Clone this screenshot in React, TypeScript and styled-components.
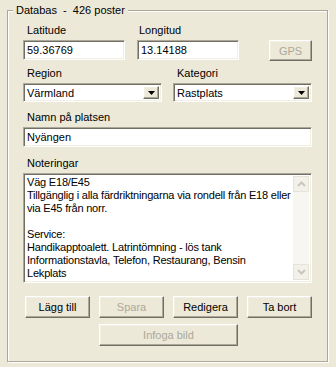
import React from 'react';
import styled, { createGlobalStyle } from 'styled-components';

const GlobalStyle = createGlobalStyle`
  html, body {
    margin: 0;
    padding: 0;
    background: #ece9d8;
  }
  body {
    font-family: "Liberation Sans", Arial, sans-serif;
    font-size: 11px;
    color: #000;
  }
`;

const sunken = `
  border-style: solid;
  border-width: 1px;
  border-color: #aca899 #fff #fff #aca899;
  box-shadow: inset 1px 1px 0 #716f64, inset -1px -1px 0 #f1efe2;
`;

const raised = `
  border-style: solid;
  border-width: 1px;
  border-color: #fff #716f64 #716f64 #fff;
  box-shadow: inset -1px -1px 0 #aca899, inset 1px 1px 0 #f1efe2;
`;

const Window = styled.div`
  width: 336px;
  height: 367px;
  padding: 10px 0 0 7px;
  box-sizing: border-box;
`;

const Group = styled.div`
  position: relative;
  width: 321px;
  height: 352px;
  box-sizing: border-box;
  padding: 13px 15px 0 15px;
  border: 1px solid #aca899;
  box-shadow: 1px 1px 0 #fff, inset 1px 1px 0 #fff;
`;

const Caption = styled.span`
  position: absolute;
  top: -7px;
  left: 5px;
  padding: 0 3px;
  line-height: 13px;
  white-space: pre;
  background: #ece9d8;
`;

const Row = styled.div<{ $gap: number; $top?: number }>`
  display: flex;
  align-items: flex-start;
  gap: ${({ $gap }) => $gap}px;
  margin-top: ${({ $top }) => $top || 0}px;
`;

const Field = styled.div<{ $width?: number; $top?: number }>`
  display: flex;
  flex-direction: column;
  width: ${({ $width }) => ($width ? `${$width}px` : '100%')};
  margin-top: ${({ $top }) => $top || 0}px;
`;

const Label = styled.label<{ $indent?: number }>`
  line-height: 13px;
  padding-left: ${({ $indent }) => $indent ?? 4}px;
  margin-bottom: 3px;
`;

const TextBox = styled.div<{ $height?: number }>`
  ${sunken}
  height: ${({ $height }) => $height || 20}px;
  box-sizing: border-box;
  background: #fff;
  padding-left: 3px;
  display: flex;
  align-items: center;
`;

const Combo = styled.div`
  ${sunken}
  height: 19px;
  box-sizing: border-box;
  background: #fff;
  display: flex;
  padding: 2px;
`;

const ComboText = styled.span`
  flex: 1;
  padding-left: 1px;
  line-height: 15px;
`;

const ComboButton = styled.span`
  ${raised}
  width: 16px;
  box-sizing: border-box;
  background: #ece9d8;
  display: flex;
  align-items: center;
  justify-content: center;
`;

const Button = styled.button<{ $width?: number }>`
  ${raised}
  width: ${({ $width }) => ($width ? `${$width}px` : '100%')};
  height: 22px;
  padding: 0;
  background: #ece9d8;
  font: inherit;
  color: #000;

  &:disabled {
    color: #aca899;
  }
`;

const GpsButton = styled(Button)`
  height: 21px;
  margin-top: 16px;
  margin-left: 18px;
`;

const Notes = styled.div`
  ${sunken}
  height: 110px;
  box-sizing: border-box;
  background: #fff;
  display: flex;
  padding: 2px;
`;

const NotesText = styled.div`
  flex: 1;
  padding-left: 1px;
  line-height: 13px;
  letter-spacing: -0.2px;
  white-space: pre;
  overflow: hidden;
`;

const ScrollBar = styled.div`
  width: 16px;
  display: flex;
  flex-direction: column;
  background: #f7f6f1;
`;

const ScrollArrow = styled.span`
  height: 16px;
  box-sizing: border-box;
  border: 1px solid #e6e4d9;
  background: #f2f1ea;
  display: flex;
  align-items: center;
  justify-content: center;
`;

const ScrollTrack = styled.span`
  flex: 1;
`;

const ButtonGrid = styled.div`
  display: grid;
  grid-template-columns: repeat(4, 65px);
  column-gap: 9px;
  row-gap: 6px;
  margin: 13px 0 0 2px;
`;

const WideButton = styled(Button)`
  grid-column: 2 / 4;
`;

const DownTriangle = () => (
  <svg width="7" height="4" viewBox="0 0 7 4">
    <polygon points="0,0 7,0 3.5,4" fill="#000" />
  </svg>
);

const Chevron = ({ up }: { up?: boolean }) => (
  <svg width="9" height="6" viewBox="0 0 9 6">
    <polyline
      points={up ? '1,5 4.5,1.5 8,5' : '1,1 4.5,4.5 8,1'}
      fill="none"
      stroke="#c9c7ba"
      strokeWidth="2"
    />
  </svg>
);

const notes = `Väg E18/E45
Tillgänglig i alla färdriktningarna via rondell från E18 eller
via E45 från norr.

Service:
Handikapptoalett. Latrintömning - lös tank
Informationstavla, Telefon, Restaurang, Bensin
Lekplats`;

export default function App() {
  return (
    <Window>
      <GlobalStyle />
      <Group>
        <Caption>Databas  -  426 poster</Caption>

        <Row $gap={12}>
          <Field $width={102}>
            <Label>Latitude</Label>
            <TextBox>59.36769</TextBox>
          </Field>
          <Field $width={102}>
            <Label $indent={2}>Longitud</Label>
            <TextBox>13.14188</TextBox>
          </Field>
          <GpsButton $width={43} disabled>GPS</GpsButton>
        </Row>

        <Row $gap={11} $top={6}>
          <Field $width={139}>
            <Label>Region</Label>
            <Combo>
              <ComboText>Värmland</ComboText>
              <ComboButton><DownTriangle /></ComboButton>
            </Combo>
          </Field>
          <Field $width={139}>
            <Label>Kategori</Label>
            <Combo>
              <ComboText>Rastplats</ComboText>
              <ComboButton><DownTriangle /></ComboButton>
            </Combo>
          </Field>
        </Row>

        <Field $top={9}>
          <Label>Namn på platsen</Label>
          <TextBox>Nyängen</TextBox>
        </Field>

        <Field $top={10}>
          <Label>Noteringar</Label>
          <Notes>
            <NotesText>{notes}</NotesText>
            <ScrollBar>
              <ScrollArrow><Chevron up /></ScrollArrow>
              <ScrollTrack />
              <ScrollArrow><Chevron /></ScrollArrow>
            </ScrollBar>
          </Notes>
        </Field>

        <ButtonGrid>
          <Button>Lägg till</Button>
          <Button disabled>Spara</Button>
          <Button>Redigera</Button>
          <Button>Ta bort</Button>
          <WideButton disabled>Infoga bild</WideButton>
        </ButtonGrid>
      </Group>
    </Window>
  );
}
